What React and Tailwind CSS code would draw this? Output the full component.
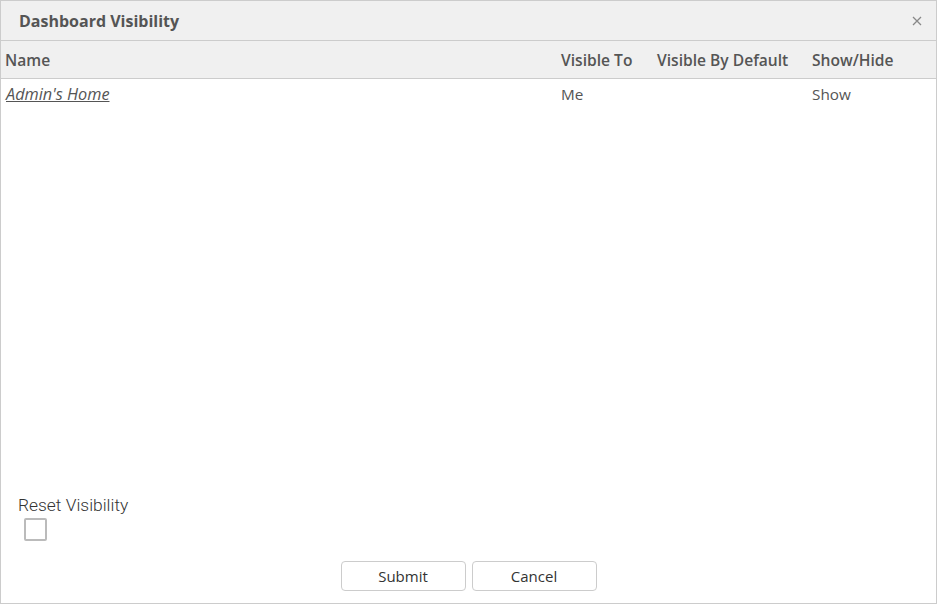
export default function App() {
  return (
    <div className="w-[937px] h-[604px] bg-white border border-[#cccccc] flex flex-col text-[#555555]" style={{ fontFamily: '"Open Sans", "Noto Sans", sans-serif' }}>
      <div className="h-[40px] shrink-0 bg-[#f0f0f0] border-b border-[#cccccc] flex items-center justify-between pl-[18px] pr-[14px]">
        <span className="text-[16px] font-bold text-[#555555]">Dashboard Visibility</span>
        <svg width="10" height="10" viewBox="0 0 10 10" className="mt-[1px]">
          <path d="M1 1L9 9M9 1L1 9" stroke="#888888" strokeWidth="1.3" />
        </svg>
      </div>
      <div className="h-[38px] shrink-0 bg-[#f0f0f0] border-b border-[#cccccc] flex items-center pt-[2px] text-[15.6px] font-semibold">
        <div className="w-[560px] pl-[4px]">Name</div>
        <div className="w-[96px]">Visible To</div>
        <div className="w-[155px]">Visible By Default</div>
        <div className="flex-1">Show/Hide</div>
      </div>
      <div className="h-[31px] flex items-center text-[15.3px]">
        <div className="w-[560px] pl-[5px]"><a className="italic underline text-[16.3px] text-[#555555]">Admin's Home</a></div>
        <div className="w-[96px]">Me</div>
        <div className="w-[155px]"></div>
        <div className="flex-1">Show</div>
      </div>
      <div className="flex-1" />
      <div className="pl-[17px]">
        <div className="text-[17.4px] text-[#333333] leading-[20px]" style={{ fontFamily: 'Roboto, sans-serif', fontWeight: 300 }}>Reset Visibility</div>
        <div className="ml-[6px] mt-[3px] w-[23px] h-[23px] border-2 border-[#bbbbbb] rounded-[2px] bg-white" />
      </div>
      <div className="flex justify-center gap-[6px] mt-[20px] mb-[12px]">
        <button className="w-[125px] h-[30px] border border-[#cccccc] rounded-[4px] bg-white text-[15px] text-[#333333]">Submit</button>
        <button className="w-[125px] h-[30px] border border-[#cccccc] rounded-[4px] bg-white text-[15px] text-[#333333]">Cancel</button>
      </div>
    </div>
  );
}
